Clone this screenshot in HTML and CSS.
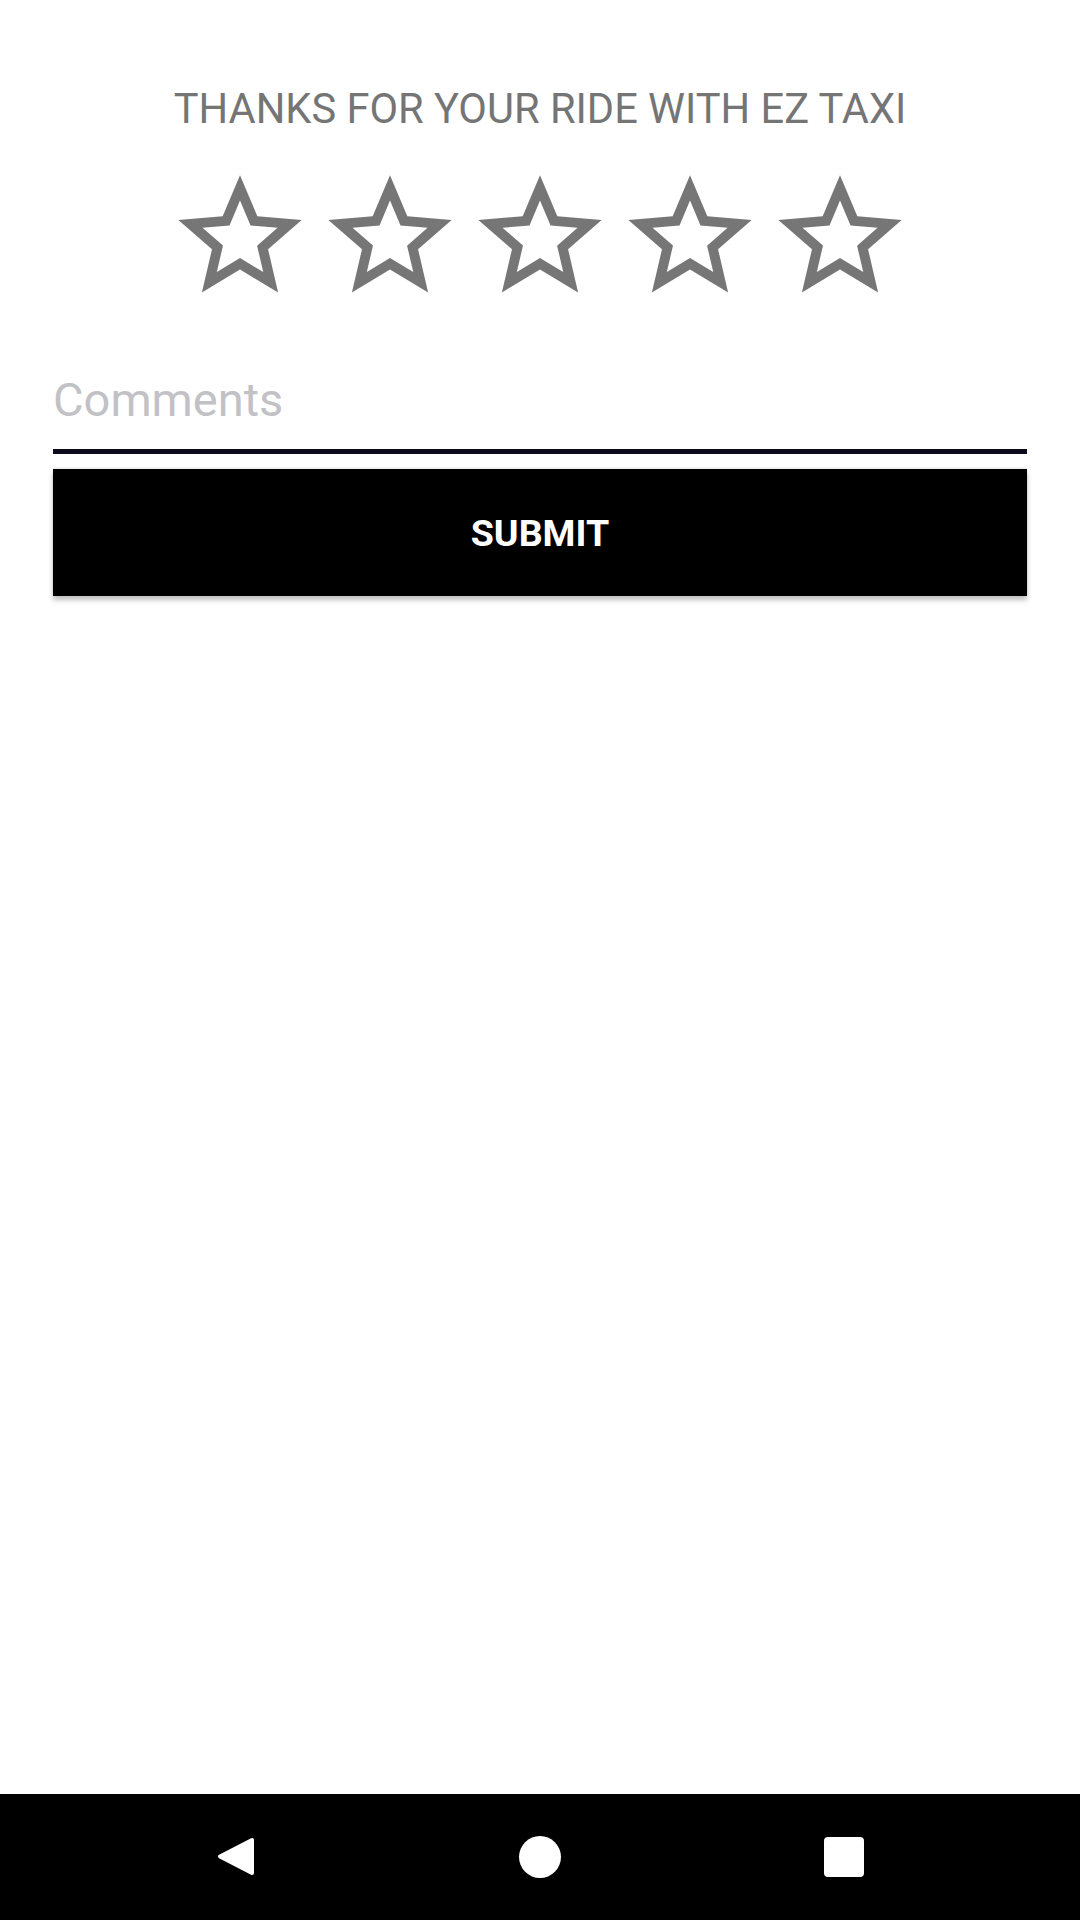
FILE: index.html
```html
<!DOCTYPE html>
<html>
<head>
<meta charset="utf-8">
<link rel="stylesheet" href="styles.css">
</head>
<body>
<div class="screen">
  <main class="content">
    <h1 class="title">THANKS FOR YOUR RIDE WITH EZ TAXI</h1>
    <div class="stars">
      <svg class="star" viewBox="0 0 24 24"><path d="M22 9.24l-7.19-.62L12 2 9.19 8.63 2 9.24l5.46 4.73L5.82 21 12 17.27 18.18 21l-1.63-7.030L22 9.24zM12 15.4l-3.76 2.27 1-4.28-3.32-2.88 4.38-.38L12 6.1l1.71 4.04 4.38.38-3.32 2.88 1 4.28L12 15.4z"/></svg>
      <svg class="star" viewBox="0 0 24 24"><path d="M22 9.24l-7.19-.62L12 2 9.19 8.63 2 9.24l5.46 4.73L5.82 21 12 17.27 18.18 21l-1.63-7.03L22 9.24zM12 15.4l-3.76 2.27 1-4.28-3.32-2.88 4.38-.38L12 6.1l1.71 4.04 4.38.38-3.32 2.88 1 4.28L12 15.4z"/></svg>
      <svg class="star" viewBox="0 0 24 24"><path d="M22 9.24l-7.19-.62L12 2 9.19 8.63 2 9.24l5.46 4.73L5.82 21 12 17.27 18.18 21l-1.63-7.03L22 9.24zM12 15.4l-3.76 2.27 1-4.28-3.32-2.88 4.38-.38L12 6.1l1.71 4.04 4.38.38-3.32 2.88 1 4.28L12 15.4z"/></svg>
      <svg class="star" viewBox="0 0 24 24"><path d="M22 9.24l-7.19-.62L12 2 9.19 8.63 2 9.24l5.46 4.73L5.82 21 12 17.27 18.18 21l-1.63-7.03L22 9.24zM12 15.4l-3.76 2.27 1-4.28-3.32-2.88 4.38-.38L12 6.1l1.71 4.04 4.38.38-3.32 2.88 1 4.28L12 15.4z"/></svg>
      <svg class="star" viewBox="0 0 24 24"><path d="M22 9.24l-7.19-.62L12 2 9.19 8.63 2 9.24l5.46 4.73L5.82 21 12 17.27 18.18 21l-1.63-7.03L22 9.24zM12 15.4l-3.76 2.27 1-4.28-3.32-2.88 4.38-.38L12 6.1l1.71 4.04 4.38.38-3.32 2.88 1 4.28L12 15.4z"/></svg>
    </div>
    <div class="field"><span class="hint">Comments</span></div>
    <button class="submit">SUBMIT</button>
  </main>
  <nav class="navbar">
    <div class="nav-item">
      <svg class="nav-icon" width="48" height="48" viewBox="0 0 48 48"><polygon points="40,7 40,40 8,23.5" fill="#fff" stroke="#fff" stroke-width="4" stroke-linejoin="round"/></svg>
    </div>
    <div class="nav-item"><span class="home"></span></div>
    <div class="nav-item"><span class="recent"></span></div>
  </nav>
</div>
</body>
</html>
```

FILE: styles.css
```css
* { box-sizing: border-box; }
html, body { margin: 0; padding: 0; background: #fff; }
body { font-family: Roboto, "Noto Sans", "Liberation Sans", sans-serif; }
.screen {
  width: 1080px;
  height: 1920px;
  display: flex;
  flex-direction: column;
}
.content {
  flex: 1;
  display: flex;
  flex-direction: column;
  padding: 0 53px;
}
.title {
  margin: 84px 0 0;
  font-size: 41.6px;
  line-height: 49px;
  font-weight: 400;
  color: #757575;
  text-align: center;
}
.stars {
  margin-top: 30px;
  display: flex;
  justify-content: center;
  gap: 2px;
}
.star {
  width: 148px;
  height: 148px;
  fill: #767676;
}
.field {
  padding-top: 61px;
  padding-bottom: 22px;
  border-bottom: 5px solid #0e0a1e;
}
.hint {
  display: block;
  font-size: 47px;
  line-height: 55px;
  color: #c2c2c6;
}
.submit {
  margin-top: 15px;
  height: 127px;
  width: 100%;
  border: none;
  background: #000;
  color: #fff;
  font-family: Roboto, "Noto Sans", sans-serif;
  font-weight: 700;
  font-size: 37.6px;
  box-shadow: 0 4px 5px rgba(0,0,0,0.25), 0 -1px 2px rgba(0,0,0,0.1);
  padding: 0;
}
.navbar {
  height: 126px;
  background: #000;
  display: flex;
  justify-content: center;
  align-items: center;
}
.nav-item {
  width: 304px;
  display: flex;
  justify-content: center;
  align-items: center;
}
.home {
  width: 42px;
  height: 42px;
  border-radius: 50%;
  background: #fff;
}
.recent {
  width: 40px;
  height: 40px;
  border-radius: 4px;
  background: #fff;
}
```
